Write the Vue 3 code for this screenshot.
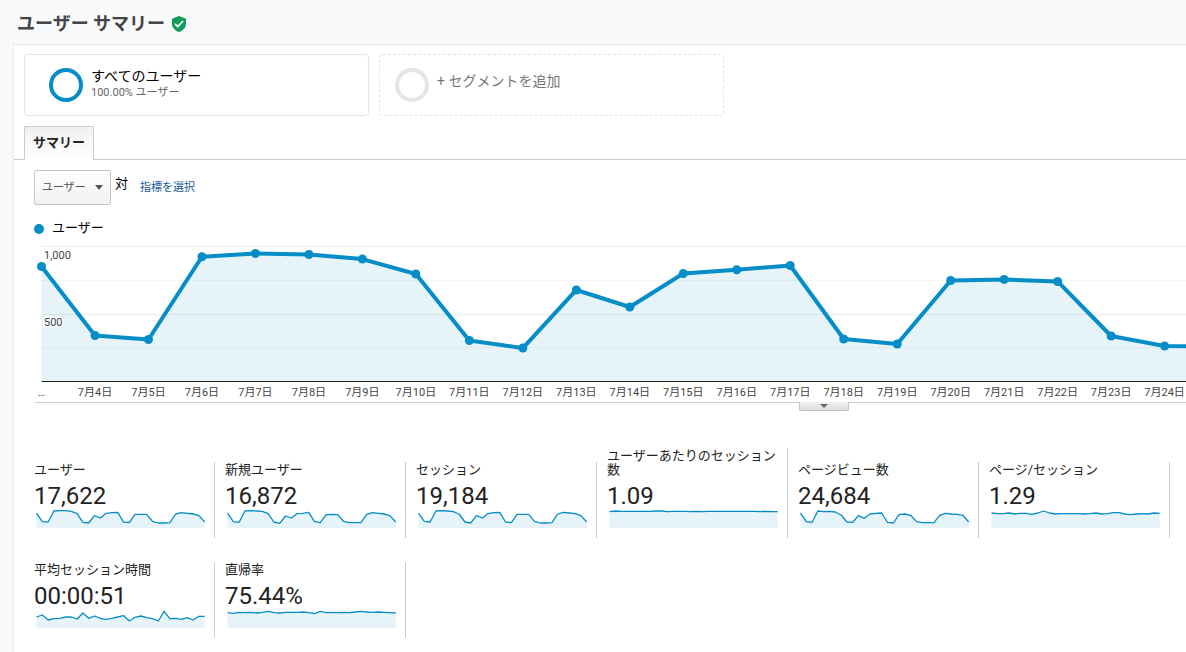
<script setup>
import { ref, computed, onMounted, onBeforeUnmount } from 'vue'

const plot = ref(null)
const width = ref(1151)
const metric = ref('users')
let observer

onMounted(() => {
  const measure = () => { width.value = plot.value.clientWidth }
  measure()
  observer = new ResizeObserver(measure)
  observer.observe(plot.value)
})
onBeforeUnmount(() => observer.disconnect())

const users = [852, 341, 311, 924, 948, 941, 907, 796, 304, 248, 678, 552, 800, 828, 859, 315, 278, 748, 756, 741, 337, 263, 256]
const left = 6.5
const base = 142.5
const gridLines = [
  { y: 7.5, major: true },
  { y: 41.5, major: false },
  { y: 75.5, major: true },
  { y: 108.5, major: false }
]
const points = computed(() => {
  const step = (width.value - left) / 21.4
  return users.map((value, i) => ({
    x: left + step * i,
    y: base - value * 0.135,
    label: i === 0 ? '…' : `7月${i + 3}日`
  }))
})
const visible = computed(() => points.value.filter(p => p.x < width.value))
const line = computed(() => points.value.map(p => `${p.x},${p.y}`).join(' '))
const area = computed(() => `${left},${base} ${line.value} ${points.value.at(-1).x},${base}`)

const tiles = [
  { label: 'ユーザー', value: '17,622', trend: [8, 34, 35, 2, 1, 1, 3, 10, 36, 38, 16, 23, 9, 7, 6, 35, 37, 12, 12, 12, 33, 38, 38, 37, 11, 7, 9, 11, 16, 35] },
  { label: '新規ユーザー', value: '16,872', trend: [8, 34, 36, 2, 1, 2, 3, 10, 35, 39, 17, 23, 10, 9, 6, 34, 37, 13, 12, 13, 33, 37, 37, 37, 12, 7, 9, 11, 16, 35] },
  { label: 'セッション', value: '19,184', trend: [8, 33, 35, 2, 1, 2, 4, 11, 35, 38, 16, 23, 10, 7, 6, 35, 37, 12, 12, 12, 33, 38, 38, 37, 11, 6, 8, 10, 16, 35] },
  { label: 'ユーザーあたりのセッション数', value: '1.09', trend: [4, 2, 3, 3, 3, 3, 3, 3, 2, 2, 4, 3, 3, 3, 4, 3, 4, 3, 3, 3, 3, 3, 3, 3, 3, 3, 4, 3, 4, 4] },
  { label: 'ページビュー数', value: '24,684', trend: [8, 34, 36, 2, 4, 3, 5, 14, 35, 36, 16, 24, 11, 9, 8, 36, 38, 13, 11, 15, 34, 37, 37, 37, 15, 9, 11, 12, 15, 35] },
  { label: 'ページ/セッション', value: '1.29', trend: [8, 10, 10, 8, 11, 9, 9, 12, 8, 2, 8, 11, 10, 10, 10, 10, 11, 10, 8, 11, 10, 7, 7, 11, 13, 11, 10, 11, 8, 9] },
  { label: '平均セッション時間', value: '00:00:51', trend: [20, 14, 29, 25, 24, 20, 20, 26, 8, 24, 17, 24, 27, 24, 20, 16, 32, 21, 17, 22, 25, 32, 3, 25, 24, 27, 22, 29, 18, 18] },
  { label: '直帰率', value: '75.44%', trend: [7, 9, 6, 7, 6, 8, 6, 3, 7, 8, 6, 6, 6, 5, 7, 10, 3, 7, 7, 7, 6, 7, 5, 3, 5, 6, 5, 6, 7, 8] }
]
const spark = trend => trend.map((v, i) => `${(0.5 + i * 5.8).toFixed(1)},${(v / 3 + 0.3).toFixed(1)}`).join(' ')
</script>

<template>
  <div class="page">
    <header class="header">
      <h1>ユーザー サマリー</h1>
      <svg class="shield" width="16" height="18" viewBox="0 0 16 18" aria-hidden="true">
        <path d="M8 1 15 3.700v5c0 3.700-3 7-7 8.300-4-1.300-7-4.600-7-8.300v-5z" fill="#0f9d58" />
        <path d="m4 8.900 2.700 2.600 5.300-5.300" fill="none" stroke="#fff" stroke-width="1.700" />
      </svg>
    </header>

    <main class="main">
      <section class="segments">
        <button type="button" class="segment">
          <span class="ring"></span>
          <span class="segment-text">
            <span class="segment-name">すべてのユーザー</span>
            <span class="segment-share">100.00% ユーザー</span>
          </span>
        </button>
        <button type="button" class="segment add">
          <span class="ring"></span>
          <span class="add-text">+ セグメントを追加</span>
        </button>
      </section>

      <nav class="tabs">
        <a href="#summary" class="tab">サマリー</a>
      </nav>

      <section id="summary" class="content">
        <div class="controls">
          <div class="picker">
            <select v-model="metric" aria-label="指標">
              <option value="users">ユーザー</option>
            </select>
            <svg class="caret" width="8" height="5" viewBox="0 0 8 5" aria-hidden="true"><path d="M0 0h8L4 5z" fill="#555" /></svg>
          </div>
          <span class="versus">対</span>
          <a href="#metric" class="choose">指標を選択</a>
        </div>

        <div class="legend"><span class="dot"></span><span class="legend-text">ユーザー</span></div>

        <div ref="plot" class="plot">
          <svg class="chart" width="100%" height="163" role="img" aria-label="ユーザー">
            <line v-for="g in gridLines" :key="g.y" :x1="left" x2="100%" :y1="g.y" :y2="g.y" :class="['grid', { major: g.major }]" />
            <polygon :points="area" class="area" />
            <line :x1="left" x2="100%" :y1="base" :y2="base" class="axis" />
            <polyline :points="line" class="line" />
            <circle v-for="p in visible" :key="p.label" :cx="p.x" :cy="p.y" r="4.500" class="point" />
            <text x="9" y="20" class="tick scale">1,000</text>
            <text x="9" y="87" class="tick scale">500</text>
            <text v-for="p in visible" :key="p.label" :x="p.x" y="157" class="tick date">{{ p.label }}</text>
          </svg>
          <button type="button" class="handle" aria-label="グラフを開く">
            <svg width="8" height="5" viewBox="0 0 8 5" aria-hidden="true"><path d="M0 0h8L4 4z" fill="#666" /></svg>
          </button>
        </div>

        <div class="tiles">
          <article v-for="t in tiles" :key="t.label" class="tile">
            <h2>{{ t.label }}</h2>
            <p>{{ t.value }}</p>
            <svg class="spark" width="170" height="18" viewBox="0 0 170 18" aria-hidden="true">
              <polygon :points="`0.5,18 ${spark(t.trend)} 168.7,18`" class="area" />
              <polyline :points="spark(t.trend)" class="spark-line" />
            </svg>
          </article>
        </div>
      </section>
    </main>
  </div>
</template>

<style>
body { margin: 0; background: #f8f9fb; }
</style>

<style scoped>
.page {
  box-sizing: border-box;
  min-height: 100vh;
  padding-left: 13px;
  display: flex;
  flex-direction: column;
  background: #f8f9fb;
  color: #222;
  font-family: Roboto, "Noto Sans CJK JP", sans-serif;
  font-size: 13px;
  overflow: hidden;
}
button, select { font-family: inherit; color: inherit; margin: 0; padding: 0; }
.header {
  display: flex;
  align-items: center;
  gap: 6px;
  height: 44px;
  padding-left: 4px;
  border-bottom: 1px solid #e5e7e9;
}
h1 { margin: 0; padding-top: 3px; font-size: 18px; line-height: 24px; font-weight: 700; color: #444; }
.shield { margin-top: 3px; }
.main { flex: 1; background: #fff; border-left: 1px solid #e9ebee; padding-top: 9px; }
.segments { display: flex; gap: 10px; padding: 0 10px; }
.segment {
  box-sizing: border-box;
  display: flex;
  align-items: center;
  width: 345px;
  height: 62px;
  padding-left: 24px;
  gap: 8px;
  background: #fff;
  border: 1px solid #e3e3e3;
  border-radius: 4px;
  text-align: left;
  color: #000;
}
.ring {
  box-sizing: border-box;
  flex: none;
  width: 34px;
  height: 34px;
  border: 4px solid #058dc7;
  border-radius: 50%;
}
.segment-text { display: flex; flex-direction: column; gap: 1px; padding-bottom: 3px; }
.segment-name { font-size: 14px; line-height: 18px; }
.segment-share { font-size: 11px; line-height: 14px; color: #666; }
.add { border-style: dashed; padding-left: 15px; }
.add .ring { border-color: #e5e5e5; }
.add-text { font-size: 14px; line-height: 18px; padding-bottom: 8px; color: #777; }
.tabs {
  display: flex;
  margin-top: 10px;
  padding-left: 10px;
  border-bottom: 1px solid #ccc;
}
.tab {
  box-sizing: border-box;
  height: 34px;
  margin-bottom: -1px;
  padding: 0 8px;
  border: 1px solid #ccc;
  border-bottom: 0;
  background: linear-gradient(#f0f0f0, #fff);
  font-weight: 700;
  line-height: 31px;
  color: #222;
  text-decoration: none;
}
.content { padding: 10px 0 14px 20px; }
.controls { display: flex; align-items: center; }
.picker { display: flex; align-items: center; }
.picker select {
  appearance: none;
  box-sizing: border-box;
  width: 77px;
  height: 35px;
  padding-left: 7px;
  border: 1px solid #c6c6c6;
  border-radius: 2px;
  background: linear-gradient(#fff, #f1f1f1);
  font-size: 11px;
  color: #555;
}
.caret { margin-left: -16px; margin-right: 8px; pointer-events: none; }
.versus { margin-left: 4px; line-height: 20px; padding-bottom: 8px; color: #000; }
.choose { margin-left: 12px; padding-bottom: 3px; font-size: 11px; color: #15599a; text-decoration: none; }
.legend {
  display: flex;
  align-items: center;
  gap: 8px;
  height: 20px;
  margin-top: 14px;
  color: #000;
}
.legend-text { line-height: 16px; padding-bottom: 2px; }
.dot { width: 10px; height: 10px; border-radius: 50%; background: #058dc7; }
.plot { position: relative; margin-left: 1px; border-bottom: 1px solid #ccc; }
.chart { display: block; }
.grid { stroke: #f5f5f5; }
.grid.major { stroke: #ebebeb; }
.axis { stroke: #222; }
.area { fill: #058dc7; fill-opacity: 0.1; }
.line { fill: none; stroke: #058dc7; stroke-width: 4; stroke-linejoin: round; }
.point { fill: #058dc7; }
.tick { font-size: 11px; fill: #444; }
.scale { stroke: #fff; stroke-width: 3; stroke-opacity: 0.8; stroke-linejoin: round; paint-order: stroke; }
.date { text-anchor: middle; }
.handle {
  position: absolute;
  top: 163px;
  right: 337px;
  box-sizing: border-box;
  display: flex;
  justify-content: center;
  width: 50px;
  height: 9px;
  padding-top: 2px;
  border: 1px solid #c4c4c4;
  border-top: 0;
  border-radius: 0 0 2px 2px;
  background: linear-gradient(#f2f2f2, #ddd);
}
.tiles {
  display: flex;
  flex-wrap: wrap;
  align-items: flex-end;
  row-gap: 24px;
  margin: 45px 0 0 -10px;
}
.tile {
  box-sizing: border-box;
  width: 191px;
  min-height: 76px;
  padding: 1px 10px 10px;
  border-right: 1px solid #ccc;
}
.tile h2 { margin: 0; font-size: 13px; line-height: 14px; font-weight: 400; }
.tile p { margin: 5px 0 0; font-size: 24px; line-height: 28px; }
.spark { display: block; margin-left: 2px; }
.spark-line { fill: none; stroke: #058dc7; stroke-width: 1.300; stroke-linejoin: round; }
</style>
